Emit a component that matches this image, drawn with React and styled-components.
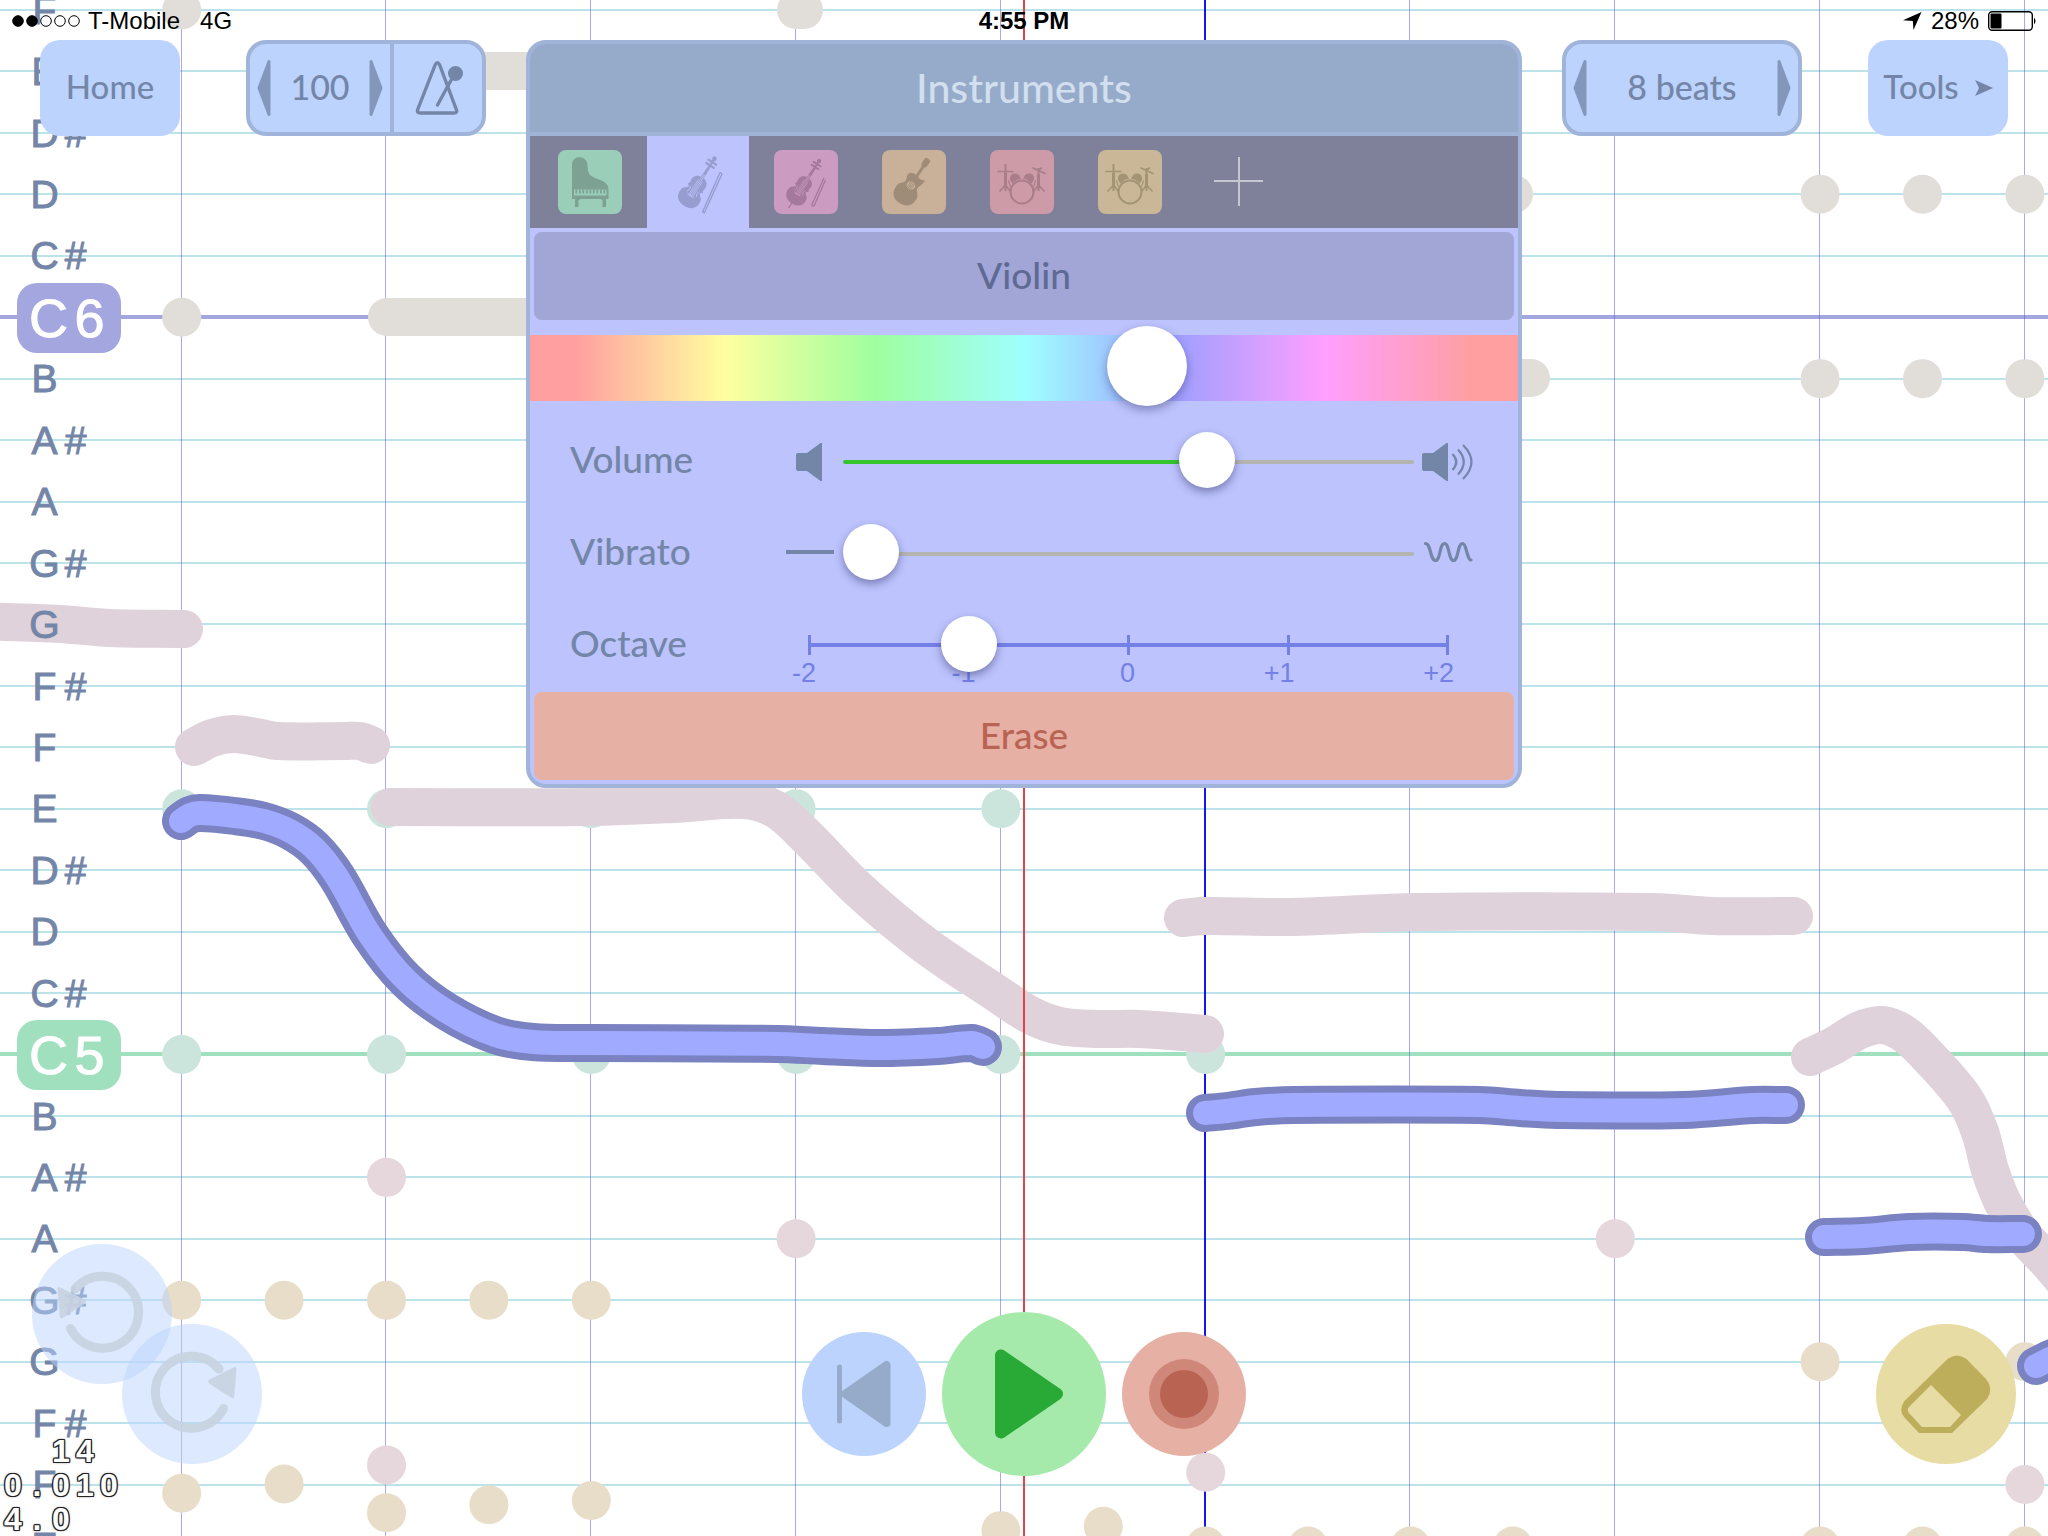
import React, { useState } from "react";
import styled, { createGlobalStyle, css } from "styled-components";

const GlobalStyle = createGlobalStyle`
  *, *::before, *::after { box-sizing: border-box; }
  body { margin: 0; background: #fff; font-family: Lato, "Open Sans", sans-serif; font-weight: 500; }
  button, input { font: inherit; margin: 0; }
`;

const slate = "#7486a8";
const edge = "#9fb4d8";
const sky = "#bcd3fd";
const lilac = "#bcc3fd";

/* ---------- page ---------- */

const Stage = styled.main`
  position: relative;
  display: flex;
  flex-direction: column;
  min-height: 100vh;
  overflow: hidden;
`;

const ScoreArt = styled.svg`
  position: absolute;
  inset: 0;
  width: 100%;
  height: 100%;
`;

const StatusBar = styled.header`
  position: relative;
  display: grid;
  grid-template-columns: 1fr auto 1fr;
  align-items: center;
  height: 40px;
  padding: 2px 11px 0;
  font: 24px "Liberation Sans", Arial, sans-serif;
  color: #000;
`;

const StatusGroup = styled.div`
  display: flex;
  align-items: center;
  gap: ${(p) => p.$gap}px;
  justify-content: ${(p) => (p.$end ? "flex-end" : "flex-start")};
`;

const Clock = styled.time`
  font-weight: 700;
`;

const TopBar = styled.div`
  position: relative;
  display: flex;
  align-items: flex-start;
  padding: 0 40px;
  gap: 40px;
`;

const Side = styled.div`
  display: flex;
  gap: 66px;
`;

const face = css`
  display: flex;
  align-items: center;
  justify-content: center;
  border: 0;
  cursor: pointer;
`;

const MenuButton = styled.button`
  ${face}
  width: 140px;
  height: 96px;
  padding: 0 0 4px;
  gap: 16px;
  border-radius: 20px;
  background: ${sky};
  color: ${slate};
  font-size: 33px;

  svg { margin-top: 4px; }
`;

const Stepper = styled.div`
  display: flex;
  width: 240px;
  height: 96px;
  border: 4px solid ${edge};
  border-radius: 20px;
  background: ${sky};
  color: ${slate};
  font-size: 34px;
`;

const StepButton = styled.button`
  ${face}
  flex: none;
  width: 28px;
  padding: 0;
  background: none;
`;

const StepValue = styled.output`
  flex: 1;
  align-self: center;
  padding-bottom: 4px;
  text-align: center;
`;

const MetronomeButton = styled.button`
  ${face}
  flex: none;
  width: 92px;
  padding: 0;
  border-left: 4px solid ${edge};
  background: none;
`;

/* ---------- note labels ---------- */

const PitchRail = styled.ul`
  position: absolute;
  top: -20px;
  left: 0;
  margin: 0;
  padding: 0;
  list-style: none;
  font-family: "Liberation Sans", Arial, sans-serif;
  -webkit-text-stroke: 1px currentColor;
`;

const PitchRow = styled.li`
  display: flex;
  align-items: center;
  height: 4vh;
  padding-left: ${(p) => (p.$octave ? 17 : 29)}px;
  color: ${slate};
  font-size: 39px;
`;

const Glyph = styled.span`
  width: 31px;
  text-align: center;
`;

const OctaveBadge = styled.strong`
  display: flex;
  justify-content: center;
  width: 104px;
  border-radius: 20px;
  background: ${(p) => p.$tone};
  color: #fff;
  font-size: 54px;
  font-weight: 400;
  line-height: 70px;

  ${Glyph} { width: 41px; }
`;

/* ---------- instruments panel ---------- */

const Panel = styled.section`
  flex: 1;
  display: flex;
  flex-direction: column;
  border: 4px solid ${edge};
  border-radius: 20px;
  background: ${lilac};
  overflow: hidden;
`;

const PanelTitle = styled.h1`
  display: flex;
  align-items: center;
  justify-content: center;
  height: 92px;
  margin: 0;
  padding-bottom: 2px;
  border-bottom: 4px solid #9fb4d6;
  background: #96aac9;
  color: #d2dfee;
  font-size: 41px;
  font-weight: 500;
`;

const Tabs = styled.div`
  display: flex;
  gap: 6px;
  height: 92px;
  padding: 0 9px;
  background: #7f8099;
`;

const Tab = styled.button`
  ${face}
  width: 102px;
  padding: 0;
  background: ${(p) => (p.$active ? lilac : "none")};
`;

const Tile = styled.span`
  display: block;
  width: 64px;
  height: 64px;
  border-radius: 8px;
  background: ${(p) => p.$tone};

  svg { display: block; overflow: visible; }
`;

const WideButton = styled.button`
  ${face}
  height: 88px;
  margin: ${(p) => p.$top}px 4px 4px;
  padding: 0 0 4px;
  border-radius: 8px;
  background: ${(p) => p.$tone};
  color: ${(p) => p.$ink};
  font-size: 37px;
`;

const HueSlider = styled.input`
  appearance: none;
  display: block;
  width: 100%;
  height: 66px;
  margin: 11px 0 13px;
  background: linear-gradient(
    90deg,
    #ff9fa0 0 45px,
    #ffff9f 195px,
    #9fff9f 345px,
    #9fffff 495px,
    #9f9fff 645px,
    #ff9fff 795px,
    #ff9fa0 945px
  );

  &::-webkit-slider-runnable-track { height: 66px; }
  &::-webkit-slider-thumb {
    appearance: none;
    width: 80px;
    height: 80px;
    margin-top: -9px;
    border-radius: 50%;
    background: #fff;
    box-shadow: 0 4px 10px rgba(40, 40, 90, 0.4);
  }
`;

const ControlRow = styled.div`
  display: grid;
  grid-template-columns: 207px 50px 1fr 52px;
  column-gap: 8px;
  align-items: center;
  justify-items: center;
  height: 92px;
  padding: 0 44px 0 40px;
`;

const OctaveRow = styled(ControlRow)`
  grid-template-columns: 207px 1fr;
  column-gap: 4px;
  padding-right: 42px;
`;

const ControlLabel = styled.label`
  justify-self: start;
  padding-bottom: 4px;
  color: ${slate};
  font-size: 37px;
`;

const Slider = styled.input`
  appearance: none;
  position: relative;
  width: 100%;
  height: 60px;
  padding-top: 4px;
  background: none;

  &::-webkit-slider-runnable-track {
    height: 4px;
    border-radius: 2px;
    background: linear-gradient(90deg, #36c42f ${(p) => p.$fill}%, #b4b4b2 ${(p) => p.$fill}%);
  }
  &::-webkit-slider-thumb {
    appearance: none;
    width: 56px;
    height: 56px;
    margin-top: -28px;
    border-radius: 50%;
    background: #fff;
    box-shadow: 0 4px 9px rgba(40, 40, 90, 0.45);
  }
`;

const OctaveSlider = styled(Slider)`
  display: block;
  &::-webkit-slider-runnable-track { background: none; }
`;

const OctaveControl = styled.div`
  position: relative;
  width: 100%;
`;

const OctaveScale = styled.div`
  position: absolute;
  inset: 21px 27px 19px;
  display: flex;
  justify-content: space-between;
  background: linear-gradient(#7480e6, #7480e6) center / 100% 4px no-repeat;
`;

const Tick = styled.span`
  position: relative;
  width: 3px;
  background: #7480e6;

  span {
    position: absolute;
    top: 23px;
    right: -5px;
    color: #7480e6;
    font: 27px/30px "Liberation Sans", Arial, sans-serif;
  }
`;

/* ---------- bottom controls ---------- */

const BottomBar = styled.footer`
  position: relative;
  display: grid;
  grid-template-columns: 1fr auto 1fr;
  align-items: end;
  margin-top: auto;
  padding: 0 32px 60px;
`;

const Transport = styled.div`
  display: flex;
  align-items: center;
  gap: 16px;
`;

const RoundButton = styled.button`
  ${face}
  width: ${(p) => p.$size}px;
  height: ${(p) => p.$size}px;
  padding: 0;
  border-radius: 50%;
  background: ${(p) => p.$tone};

  svg { display: block; overflow: visible; }
`;

const History = styled.div`
  display: flex;
  align-items: flex-start;
  height: 232px;

  ${RoundButton} + ${RoundButton} { margin: 80px 0 0 -50px; }
`;

const ToolCorner = styled.div`
  justify-self: end;
  padding-bottom: 12px;
`;

const Readout = styled.div`
  position: absolute;
  left: 1px;
  bottom: 0;
  font: 700 32px/34px "Liberation Sans", Arial, sans-serif;
  color: #fff;
  text-shadow:
    -1px -1px 0 #222, 0 -1px 0 #222, 1px -1px 0 #222, 1px 0 0 #222,
    1px 1px 0 #222, 0 1px 0 #222, -1px 1px 0 #222, -1px 0 0 #222,
    0 0 3px #222;
`;

const ReadoutLine = styled.div`
  display: flex;
  padding-left: ${(p) => p.$indent * 24}px;

  span { width: 24px; text-align: center; }
`;

/* ---------- score drawing ---------- */

const BEAT = 204.8;
const STEP = 61.44;
const X0 = 181;
const Y0 = 10;

function smooth(points) {
  let d = `M${points[0][0]} ${points[0][1]}`;
  for (let i = 0; i < points.length - 1; i++) {
    const a = points[i - 1] || points[i];
    const b = points[i];
    const c = points[i + 1];
    const e = points[i + 2] || c;
    const k = Math.hypot(c[0] - b[0], c[1] - b[1]);
    const u = Math.hypot(c[0] - a[0], c[1] - a[1]) || 1;
    const v = Math.hypot(e[0] - b[0], e[1] - b[1]) || 1;
    const f = k / 3;
    d += `C${b[0] + ((c[0] - a[0]) / u) * f} ${b[1] + ((c[1] - a[1]) / u) * f} ${
      c[0] - ((e[0] - b[0]) / v) * f
    } ${c[1] - ((e[1] - b[1]) / v) * f} ${c[0]} ${c[1]}`;
  }
  return d;
}

const celloLines = [
  [[-20, 621], [60, 624], [110, 628], [184, 629]],
  [[194, 747], [212, 738], [233, 734], [256, 737], [278, 741], [346, 741], [360, 741], [371, 745]],
  [[390, 807], [588, 807], [674, 804], [743, 800], [775, 809], [805, 835], [859, 890], [925, 945], [996, 993], [1030, 1015], [1060, 1026], [1097, 1029], [1140, 1029], [1205, 1034]],
  [[1183, 918], [1205, 916], [1290, 917], [1418, 912], [1652, 912], [1713, 916], [1794, 916]],
  [[1810, 1057], [1835, 1045], [1860, 1030], [1882, 1025], [1903, 1033], [1925, 1053], [1964, 1098], [1980, 1132], [1990, 1170], [2003, 1203], [2022, 1234], [2048, 1262], [2080, 1300]],
];

const violinLines = [
  [[181, 821], [190, 815], [200, 813], [235, 816], [264, 821], [290, 831], [314, 848], [337, 877], [370, 935], [405, 979], [446, 1011], [495, 1035], [533, 1042], [588, 1043], [777, 1044], [823, 1046], [880, 1048], [938, 1046], [972, 1043], [983, 1047]],
  [[1205, 1113], [1227, 1111], [1256, 1107], [1294, 1105], [1479, 1105], [1520, 1108], [1557, 1110], [1684, 1110], [1754, 1105], [1786, 1105]],
  [[1824, 1237], [1863, 1236], [1910, 1232], [1963, 1232], [1987, 1234], [2023, 1234]],
  [[2036, 1366], [2058, 1356], [2090, 1352]],
];

const dots = {
  "#cce5dc": [[0, 13], [1, 13], [2, 13], [3, 13], [4, 13], [0, 17], [1, 17], [2, 17], [3, 17], [4, 17], [5, 17]],
  "#e6d7dc": [[1, 19], [3, 20], [7, 20], [1, 23.68], [5, 23.8], [9, 24]],
  "#e8ddc9": [[0, 21], [0.5, 21], [1, 21], [1.5, 21], [2, 21], [0, 24.14], [0.5, 23.99], [1, 24.46], [1.5, 24.33], [2, 24.26], [4, 24.75], [4.5, 24.68], [5, 25], [5.5, 25], [6, 25], [6.5, 25], [8, 25], [8.5, 25], [9, 25], [8, 22], [9, 22]],
  "#e1deda": [[0, 0], [0, 5], [8, 3], [8.5, 3], [9, 3], [8, 6], [8.5, 6], [9, 6]],
};

const holds = [
  [796, 10, 804],
  [400, 71, 600],
  [387, 317, 600],
  [1450, 194, 1514],
  [1450, 378, 1531],
];

function Score() {
  return (
    <ScoreArt viewBox="0 0 2048 1536" preserveAspectRatio="xMinYMin slice" aria-hidden="true">
      {Array.from({ length: 25 }, (_, k) => (
        <rect key={k} x="0" y={Math.round(Y0 + k * STEP) - 1} width="4096" height="2" fill="#bde3ea" />
      ))}
      <rect x="0" y="315" width="4096" height="4" fill="#a4a7df" />
      <rect x="0" y="1052" width="4096" height="4" fill="#a0e0bf" />
      {Array.from({ length: 10 }, (_, k) => (
        <rect key={k} x={Math.round(X0 + k * BEAT - 0.5)} y="0" width="1" height="1536" fill="#5b4fe0" fillOpacity="0.5" />
      ))}
      <rect x="1023" y="0" width="2" height="1536" fill="#e04444" />
      <rect x="1204" y="0" width="2" height="1536" fill="#1414f5" />
      {holds.map(([x, y, end]) => (
        <path key={y + x} d={`M${x} ${y}H${end}`} stroke="#e1deda" strokeWidth="38" strokeLinecap="round" />
      ))}
      {Object.entries(dots).map(([tone, list]) =>
        list.map(([b, s]) => (
          <circle key={tone + b + "-" + s} cx={X0 + b * BEAT + 0.7} cy={Y0 + s * STEP} r="19.5" fill={tone} />
        ))
      )}
      <g fill="none" strokeLinecap="round" strokeLinejoin="round">
        {celloLines.map((p, i) => (
          <path key={i} d={smooth(p)} stroke="#dfd2db" strokeWidth="38" />
        ))}
        {violinLines.map((p, i) => (
          <g key={i}>
            <path d={smooth(p)} stroke="#7a82c2" strokeWidth="38" />
            <path d={smooth(p)} stroke="#a0aaff" strokeWidth="24" />
          </g>
        ))}
      </g>
      <rect x="1023" y="790" width="2" height="746" fill="#e04444" />
    </ScoreArt>
  );
}

const scale = ["F", "E", "D#", "D", "C#", "C", "B", "A#", "A", "G#", "G", "F#"];
const pitches = Array.from({ length: 26 }, (_, k) =>
  k === 5 ? "C6" : k === 17 ? "C5" : scale[k % 12]
);

/* ---------- icons ---------- */

const Arrow = ({ flip }) => (
  <svg width="14" height="58" viewBox="0 0 14 58" aria-hidden="true">
    <path
      d={flip ? "M2 2.500 12 29 2 55.500Z" : "M12 2.500 2 29 12 55.500Z"}
      fill="#8397bb"
      stroke="#8397bb"
      strokeWidth="3"
      strokeLinejoin="round"
    />
  </svg>
);

const Metronome = () => (
  <svg width="52" height="56" viewBox="0 0 52 56" fill="none" stroke={slate} strokeWidth="3.400" strokeLinejoin="round" strokeLinecap="round" aria-hidden="true">
    <path d="M23.300 4.500 5.500 50Q5 53 8 53H42Q45.500 53 44.500 50L27.500 4.500Q25.400 1 23.300 4.500Z" />
    <path d="M25.500 45 43 13" />
    <circle cx="43.500" cy="13.500" r="7.500" fill={slate} stroke="none" />
  </svg>
);

const Piano = ({ ink, tone }) => (
  <svg width="64" height="64" viewBox="0 0 64 64" aria-hidden="true">
    <path fill={ink} d="M14 49V15C14 4.500 29 5 29.500 15C29.500 24 32 26 38.500 28.500C46 31.500 50.500 33 50.500 39.500V49H48V57H44.500V50L42 49H23L20.500 50V57H17V49Z" />
    <rect x="16" y="39.500" width="32.500" height="6" fill={tone} />
    {[18.5, 22, 25.5, 29, 32.5, 36, 39.5, 43, 46.5].map((x) => (
      <rect key={x} x={x - 1} y="39.500" width="1.700" height="4" fill={ink} />
    ))}
  </svg>
);

const Violin = ({ ink, tone, cello }) => (
  <svg width="64" height="64" viewBox="0 0 64 64" aria-hidden="true">
    <g transform={cello ? "translate(23 45) rotate(33) scale(.9)" : "translate(24 46.500) rotate(33)"}>
      <path
        fill={ink}
        d="M0 11C-8 11-12.500 6-11.500-1C-11-5-8-5-6.500-8L-9-10C-6.500-12-9-14-8-17.500C-7-21.500-3.500-22.500-1.800-22.500L-1.200-38H1.200L1.800-22.500C3.500-22.500 7-21.500 8-17.500C9-14 6.500-12 9-10L6.500-8C8-5 11-5 11.500-1C12.500 6 8 11 0 11Z"
      />
      <path stroke={ink} strokeWidth="2.200" strokeLinecap="round" d="M0-38V-44M-4.500-37H4.500M-4.500-41H4.500" />
      <circle cy="-45" r="2.300" fill={ink} />
      <path stroke={tone} strokeWidth=".7" d="M-2.200 0V-19M-.7 0V-26M.8 0V-26M2.300 0V-19M-4-1H4" />
      <path stroke={tone} strokeWidth=".8" fill="none" d="M-5-9Q-3.500-6-5.500-3M5-9Q3.500-6 5.500-3" />
      {cello && <path stroke={ink} strokeWidth="1.600" d="M0 10V17" />}
    </g>
    {cello ? (
      <path stroke={ink} strokeWidth="1.300" d="M37.500 55.500 50 28M40 56 51.500 30M38 55.500 40 56.500" />
    ) : (
      <path stroke={ink} strokeWidth="1.400" d="M36.500 62 54 22.500M38.500 62.500 56 24M36 61.500 39 63M54 22.500 56.500 24" />
    )}
  </svg>
);

const Guitar = ({ ink, tone }) => (
  <svg width="64" height="64" viewBox="0 0 64 64" aria-hidden="true">
    <g transform="translate(24 43) rotate(33)">
      <path
        fill={ink}
        d="M0 12C-9 12-12.500 6-12-1C-11.500-6-7-7-7-10C-7-13-9-14-8.500-17C-8-20.500-4-21.500-1.500-20.500V-31L-3-33L-3.200-40Q0-42 3.200-40L3-33L1.500-31V-20.500C4-18 6-19.500 9-20.500C10-17 7-13 7-10C7-7 11.500-6 12-1C12.500 6 9 12 0 12Z"
      />
      <circle cy="-9" r="4.300" fill={tone} />
      <path stroke={ink} strokeWidth=".8" d="M-2.200-13V-5M-.7-13.500V-4.500M.8-13.500V-4.500M2.300-13V-5" />
    </g>
  </svg>
);

const Drums = ({ ink }) => (
  <svg width="64" height="64" viewBox="0 0 64 64" fill="none" stroke={ink} aria-hidden="true">
    <circle cx="32" cy="42" r="11.500" strokeWidth="2" />
    <path fill={ink} stroke="none" d="M20 30C19 24 25 22 29 25L31 29C27 29 24 31 23 34ZM44 30C45 24 39 22 35 25L33 29C37 29 40 31 41 34Z" />
    <path strokeWidth="1.200" d="M18.500 30.500Q19.500 36 22 37.500M45.500 30.500Q44.500 36 42 37.500" />
    <path strokeWidth="2" d="M15.500 14V41M48.500 18V41" />
    <path strokeWidth="1.700" strokeLinecap="round" d="M8 21.500H23M43 18 55 23.500M48 20.500 51.500 18" />
    <path strokeWidth="1.700" d="M15.500 35 9.500 41.500M15.500 35 20.500 41.500M48.500 35 43.500 41.500M48.500 35 54.500 41.500" />
    <path strokeWidth="3" d="M15.500 23V38M48.500 24V38" />
  </svg>
);

const Speaker = ({ waves }) => (
  <svg width={waves ? 52 : 28} height="42" viewBox={waves ? "0 -4 52 42" : "0 -4 28 42"} aria-hidden="true">
    <path fill={slate} d="M2 10H11L24.500 0H26V38H24.500L11 28H2Q0 28 0 26V12Q0 10 2 10Z" />
    {waves && (
      <path fill="none" stroke={slate} strokeWidth="2.200" d="M30.500 11Q38 19 30.500 27M36 6.500Q47.500 19 36 31.500M41 2Q58 19 41 36" />
    )}
  </svg>
);

const Redo = ({ mirror }) => (
  <svg width="140" height="140" viewBox="0 0 140 140" aria-hidden="true">
    <g transform={mirror ? "translate(140 0) scale(-1 1)" : undefined} opacity=".9">
      <path fill="none" stroke="#c8d3e2" strokeWidth="9" strokeLinecap="round" d="M101.500 84.500A36 36 0 1 1 97 45" />
      <path fill="#c8d3e2" d="M87.500 55.500Q84.500 57.500 88 60L109.500 74Q112 75 112.300 72L114.500 45Q114 42 111.500 43.500Z" />
    </g>
  </svg>
);

const Previous = () => (
  <svg width="124" height="124" viewBox="0 0 124 124" aria-hidden="true">
    <g fill="#96aac9" stroke="#96aac9" strokeLinejoin="round" strokeLinecap="round">
      <path strokeWidth="5" d="M37.500 35V89" />
      <path strokeWidth="8" d="M43 62 84.500 33V91Z" />
    </g>
  </svg>
);

const Play = () => (
  <svg width="164" height="164" viewBox="0 0 164 164" aria-hidden="true">
    <path fill="#29a935" stroke="#29a935" strokeWidth="12" strokeLinejoin="round" d="M59 43.500V120.500L115 82Z" />
  </svg>
);

const RecordDot = () => (
  <svg width="124" height="124" viewBox="0 0 124 124" aria-hidden="true">
    <circle cx="62" cy="62" r="35" fill="#cf877a" />
    <circle cx="62" cy="62" r="24" fill="#b96453" />
  </svg>
);

const Eraser = () => (
  <svg width="140" height="140" viewBox="0 0 140 140" aria-hidden="true">
    <path fill="#bdae5b" d="M71.500 35Q81 28 90.500 35L110 55Q118 64.500 111 75L76 109H43L28.500 93.500Q22 86 28.500 77Z" />
    <path fill="#e7dca4" d="M55 61 85 91 74 103H46L33 89Q30.500 86 33 83Z" />
  </svg>
);

const tabs = [
  { name: "Piano", tone: "#9bceb9", ink: "#7da193", Icon: Piano },
  { name: "Violin", tone: lilac, ink: "#979dce", Icon: Violin },
  { name: "Cello", tone: "#cb9bc1", ink: "#a5799c", Icon: Violin, cello: true },
  { name: "Guitar", tone: "#c9b199", ink: "#9f8c78", Icon: Guitar },
  { name: "Drums", tone: "#cc9ba7", ink: "#a97d89", Icon: Drums },
  { name: "Percussion", tone: "#c9b798", ink: "#a39476", Icon: Drums },
];

export default function App() {
  const [hue, setHue] = useState(636);
  const [volume, setVolume] = useState(652);
  const [vibrato, setVibrato] = useState(0);
  const [octave, setOctave] = useState(-1);
  const [tab, setTab] = useState("Violin");

  return (
    <Stage>
      <GlobalStyle />
      <Score />
      <PitchRail>
        {pitches.map((p, i) => (
          <PitchRow key={i} $octave={/\d/.test(p)}>
            {/\d/.test(p) ? (
              <OctaveBadge $tone={p === "C6" ? "#a4a7df" : "#a0e0bf"}>
                <Glyph>{p[0]}</Glyph>
                <Glyph>{p[1]}</Glyph>
              </OctaveBadge>
            ) : (
              p.split("").map((c) => <Glyph key={c}>{c}</Glyph>)
            )}
          </PitchRow>
        ))}
      </PitchRail>

      <StatusBar>
        <StatusGroup $gap={20}>
          <StatusGroup $gap={7}>
            <svg width="70" height="14" viewBox="0 0 70 14" aria-hidden="true">
              {[7, 21, 35, 49, 63].map((x, i) => (
                <circle key={x} cx={x} cy="7" r="5.300" stroke="#000" strokeWidth="1" fill={i < 2 ? "#000" : "none"} />
              ))}
            </svg>
            <span>T-Mobile</span>
          </StatusGroup>
          <span>4G</span>
        </StatusGroup>
        <Clock>4:55 PM</Clock>
        <StatusGroup $gap={9} $end>
          <svg width="19" height="18" viewBox="0 0 19 18" aria-hidden="true">
            <path d="M18.500 0 10.500 18 9.800 9 0 8.300Z" />
          </svg>
          <span>28%</span>
          <svg width="49" height="20" viewBox="0 0 49 20" aria-hidden="true">
            <rect x=".7" y=".7" width="43.600" height="18.600" rx="3.500" fill="none" stroke="#000" strokeWidth="1.400" />
            <rect x="2.500" y="2.500" width="11" height="15" rx="1" />
            <path d="M46 6.500Q49 10 46 13.500Z" />
          </svg>
        </StatusGroup>
      </StatusBar>

      <TopBar>
        <Side>
          <MenuButton type="button">Home</MenuButton>
          <Stepper>
            <StepButton type="button" aria-label="Slower"><Arrow /></StepButton>
            <StepValue>100</StepValue>
            <StepButton type="button" aria-label="Faster"><Arrow flip /></StepButton>
            <MetronomeButton type="button" aria-label="Metronome"><Metronome /></MetronomeButton>
          </Stepper>
        </Side>

        <Panel>
          <PanelTitle>Instruments</PanelTitle>
          <Tabs>
            {tabs.map(({ name, tone, ink, Icon, cello }) => (
              <Tab key={name} type="button" aria-label={name} $active={tab === name} onClick={() => setTab(name)}>
                <Tile $tone={tone}>
                  <Icon ink={ink} tone={tone} cello={cello} />
                </Tile>
              </Tab>
            ))}
            <Tab type="button" aria-label="Add instrument">
              <svg width="50" height="50" viewBox="0 0 50 50" aria-hidden="true">
                <path d="M26 0V49M1 24H50" stroke="#c7c7d0" strokeWidth="2" />
              </svg>
            </Tab>
          </Tabs>
          <WideButton type="button" $top={4} $tone="#a2a6d7" $ink="#5f6a94">Violin</WideButton>
          <HueSlider type="range" aria-label="Color" min="0" max="1000" value={hue} onChange={(e) => setHue(+e.target.value)} />
          <ControlRow>
            <ControlLabel htmlFor="volume">Volume</ControlLabel>
            <Speaker />
            <Slider id="volume" type="range" min="0" max="1000" $fill={(volume * 9 + 500) / 100} value={volume} onChange={(e) => setVolume(+e.target.value)} />
            <Speaker waves />
          </ControlRow>
          <ControlRow>
            <ControlLabel htmlFor="vibrato">Vibrato</ControlLabel>
            <svg width="48" height="4" viewBox="0 0 48 4" aria-hidden="true"><rect width="48" height="4" fill={slate} /></svg>
            <Slider id="vibrato" type="range" min="0" max="1000" $fill={0} value={vibrato} onChange={(e) => setVibrato(+e.target.value)} />
            <svg width="50" height="22" viewBox="0 0 50 22" fill="none" stroke={slate} strokeWidth="3.200" strokeLinecap="round" aria-hidden="true">
              <path d="M2.500 2.500C8 2.500 7 19.500 12.500 19.500C17.500 19.500 16.500 2.500 21.500 2.500C26.500 2.500 25.500 19.500 30.500 19.500C35.500 19.500 34.500 2.500 39.500 2.500C43.500 2.500 44 19 48 19" />
            </svg>
          </ControlRow>
          <OctaveRow>
            <ControlLabel htmlFor="octave">Octave</ControlLabel>
            <OctaveControl>
              <OctaveScale>
                {["-2", "-1", "0", "+1", "+2"].map((t) => (
                  <Tick key={t}><span>{t}</span></Tick>
                ))}
              </OctaveScale>
              <OctaveSlider id="octave" type="range" min="-2" max="2" $fill={0} value={octave} onChange={(e) => setOctave(+e.target.value)} />
            </OctaveControl>
          </OctaveRow>
          <WideButton type="button" $top={2} $tone="#e6b0a5" $ink="#b96453">Erase</WideButton>
        </Panel>

        <Side>
          <Stepper>
            <StepButton type="button" aria-label="Fewer beats"><Arrow /></StepButton>
            <StepValue>8 beats</StepValue>
            <StepButton type="button" aria-label="More beats"><Arrow flip /></StepButton>
          </Stepper>
          <MenuButton type="button">
            Tools
            <svg width="18" height="16" viewBox="0 0 18 16" aria-hidden="true">
              <path d="M0 0 18 8 0 16 4 8Z" fill={slate} />
            </svg>
          </MenuButton>
        </Side>
      </TopBar>

      <BottomBar>
        <History>
          <RoundButton type="button" aria-label="Undo" $size={140} $tone="rgba(188, 211, 253, 0.5)"><Redo mirror /></RoundButton>
          <RoundButton type="button" aria-label="Redo" $size={140} $tone="rgba(188, 211, 253, 0.5)"><Redo /></RoundButton>
        </History>
        <Transport>
          <RoundButton type="button" aria-label="Previous" $size={124} $tone={sky}><Previous /></RoundButton>
          <RoundButton type="button" aria-label="Play" $size={164} $tone="#a5e9ab"><Play /></RoundButton>
          <RoundButton type="button" aria-label="Record" $size={124} $tone="#e6b0a5"><RecordDot /></RoundButton>
        </Transport>
        <ToolCorner>
          <RoundButton type="button" aria-label="Eraser" $size={140} $tone="#e7dca4"><Eraser /></RoundButton>
        </ToolCorner>
      </BottomBar>

      <Readout>
        {[["14", 2], ["0.010", 0], ["4.0", 0]].map(([t, indent]) => (
          <ReadoutLine key={t} $indent={indent}>
            {t.split("").map((c, i) => <span key={i}>{c}</span>)}
          </ReadoutLine>
        ))}
      </Readout>
    </Stage>
  );
}
